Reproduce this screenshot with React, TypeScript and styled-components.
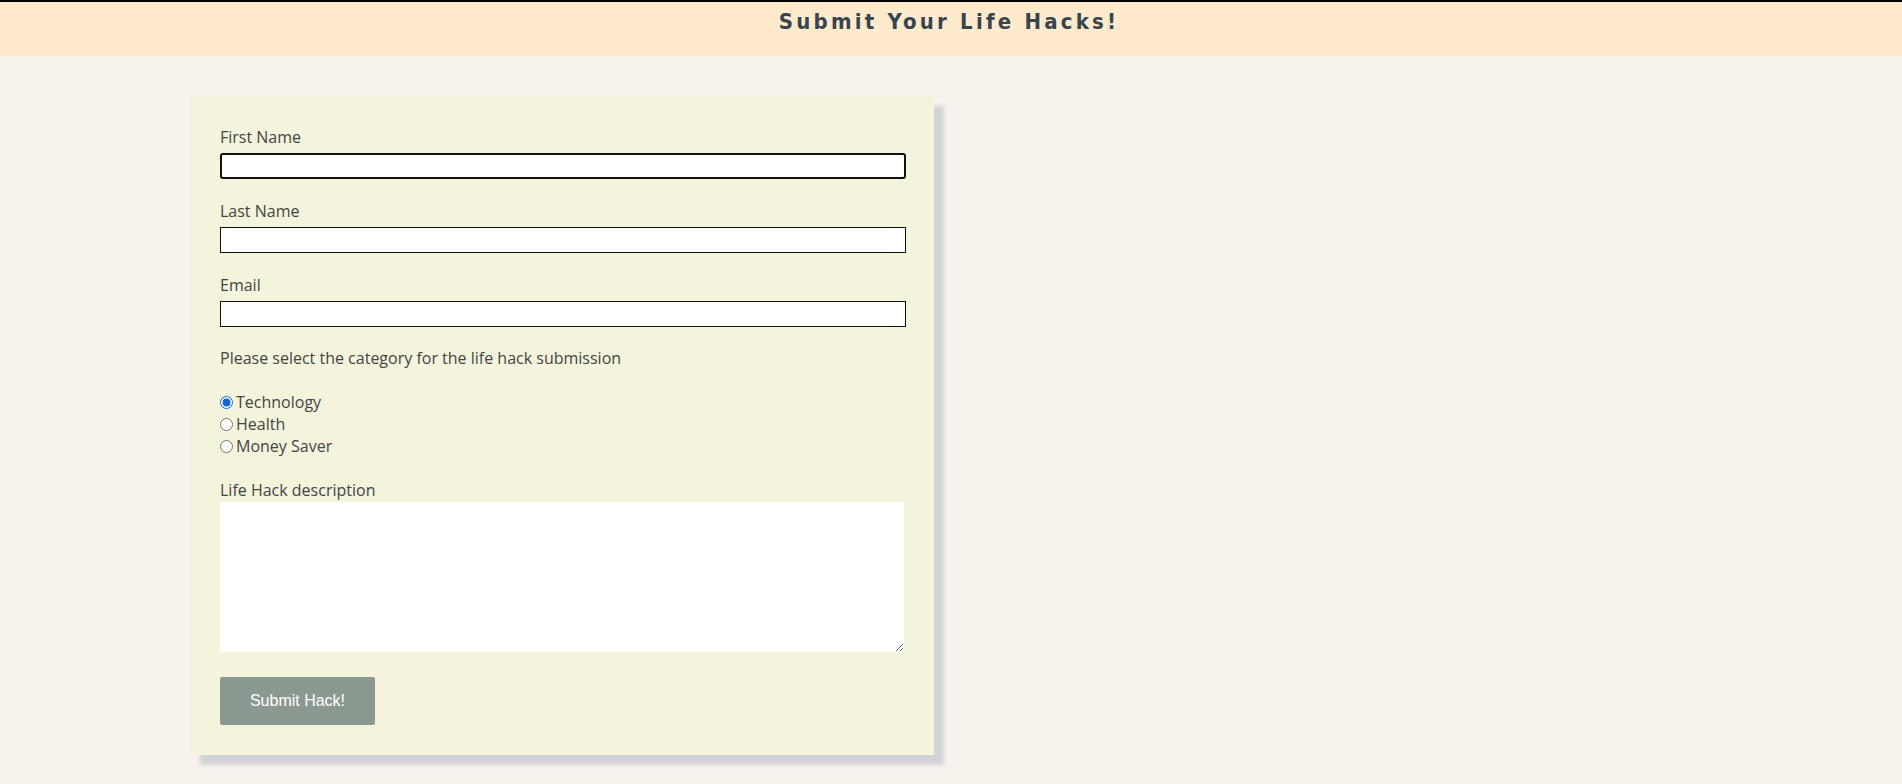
import React from "react";
import styled, { createGlobalStyle } from "styled-components";

const Global = createGlobalStyle`
  html, body { margin: 0; padding: 0; }
  body {
    background: #f7f2ec;
    font-family: "Open Sans", "Noto Sans", sans-serif;
    color: #444;
    min-height: 784px;
  }
  * { box-sizing: border-box; }
`;

const Header = styled.header`
  height: 56px;
  background: #ffebcc;
  border-top: 2px solid #000;
  display: flex;
  justify-content: center;
`;

const Title = styled.h1`
  margin: 6px 0 0 0;
  font-family: "DejaVu Sans", sans-serif;
  font-stretch: condensed;
  font-weight: bold;
  font-size: 22px;
  line-height: 28px;
  letter-spacing: 3.2px;
  color: #36454f;
  padding-right: 4px;
`;

const Card = styled.form`
  margin: 40px 0 0 190px;
  width: 744px;
  padding: 30px;
  background: #f4f4dc;
  box-shadow: 10px 10px 4px #d2d3d7;
  display: flex;
  flex-direction: column;
  align-items: flex-start;
`;

const Label = styled.label<{ $gap?: number }>`
  display: block;
  font-size: 16px;
  line-height: 22px;
  color: #444;
  margin-bottom: ${(p) => p.$gap ?? 5}px;
`;

const TextInput = styled.input<{ $focused?: boolean }>`
  display: block;
  width: calc(100% + 2px);
  height: 26px;
  margin: 0 0 21px 0;
  background: #fff;
  border: 1px solid #111;
  border-radius: 0;
  outline: none;
  ${(p) =>
    p.$focused &&
    `
    border: 2px solid #111;
    border-radius: 3px;
  `}
`;

const Prompt = styled.p`
  margin: -1px 0 22px 0;
  font-size: 16px;
  line-height: 22px;
`;

const RadioList = styled.div`
  display: flex;
  flex-direction: column;
  margin-bottom: 22px;
`;

const RadioRow = styled.label`
  display: flex;
  align-items: center;
  font-size: 16px;
  line-height: 22px;
  height: 22px;
`;

const Radio = styled.input`
  width: 13px;
  height: 13px;
  margin: 1px 3px 0 0;
  accent-color: #0b65e8;
`;

const TextArea = styled.textarea`
  display: block;
  width: 684px;
  height: 150px;
  border: none;
  background: #fff;
  margin: 0 0 25px 0;
  outline: none;
  resize: both;
`;

const Button = styled.button`
  width: 155px;
  height: 48px;
  background: #8b9890;
  color: #fff;
  border: none;
  border-radius: 2px;
  font-family: "Liberation Sans", Arial, sans-serif;
  font-size: 16px;
`;

export default function App() {
  return (
    <>
      <Global />
      <Header>
        <Title>Submit Your Life Hacks!</Title>
      </Header>
      <Card onSubmit={(e) => e.preventDefault()}>
        <Label htmlFor="fn">First Name</Label>
        <TextInput id="fn" type="text" $focused />
        <Label htmlFor="ln">Last Name</Label>
        <TextInput id="ln" type="text" />
        <Label htmlFor="em">Email</Label>
        <TextInput id="em" type="email" />
        <Prompt>Please select the category for the life hack submission</Prompt>
        <RadioList>
          <RadioRow>
            <Radio type="radio" name="cat" defaultChecked />
            Technology
          </RadioRow>
          <RadioRow>
            <Radio type="radio" name="cat" />
            Health
          </RadioRow>
          <RadioRow>
            <Radio type="radio" name="cat" />
            Money Saver
          </RadioRow>
        </RadioList>
        <Label htmlFor="desc" $gap={1}>Life Hack description</Label>
        <TextArea id="desc" />
        <Button type="submit">Submit Hack!</Button>
      </Card>
    </>
  );
}
